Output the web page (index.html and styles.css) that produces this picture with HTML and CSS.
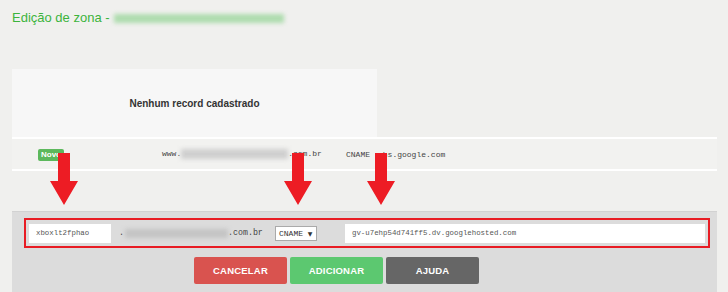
FILE: index.html
```html
<!DOCTYPE html>
<html lang="pt-BR">
<head>
  <meta charset="UTF-8">
  <title>Edição de zona</title>
  <link rel="stylesheet" href="styles.css">
</head>
<body>
  <div class="page">
    <h1 class="title">Edição de zona - <span class="blur blur-title"></span></h1>

    <div class="empty">Nenhum record cadastrado</div>

    <div class="record-row">
      <div class="cell cell-badge"><span class="badge">Novo</span></div>
      <div class="cell cell-name">www.<span class="blur blur-row"></span>.com.br</div>
      <div class="cell cell-value"><span class="type">CNAME</span>ghs.google.com</div>
    </div>

    <div class="panel">
      <div class="edit-line">
        <div class="field field-name">xboxlt2fphao</div>
        <div class="domain">.<span class="blur blur-panel"></span>.com.br</div>
        <div class="select">CNAME <span class="caret">▼</span></div>
        <div class="field field-value">gv-u7ehp54d741ff5.dv.googlehosted.com</div>
      </div>
      <div class="actions">
        <button class="btn btn-cancel">CANCELAR</button>
        <button class="btn btn-add">ADICIONAR</button>
        <button class="btn btn-help">AJUDA</button>
      </div>
    </div>
  </div>

  <!-- setas de destaque por cima da tela -->
  <svg class="arrows" width="728" height="292" viewBox="0 0 728 292">
    <polygon points="58,153 70,153 70,181 78,181 64,205 50,181 58,181"/>
    <polygon points="292,153 304,153 304,181 312,181 298,205 284,181 292,181"/>
    <polygon points="375,153 387,153 387,181 395,181 381,205 367,181 375,181"/>
  </svg>
</body>
</html>
```

FILE: styles.css
```css
body {
  margin: 0;
  background-color: #f0f0ee;
  font-family: "Liberation Sans", Arial, sans-serif;
  position: relative;
  width: 728px;
  height: 292px;
  overflow: hidden;
}
.page {
  padding: 0 11px 0 12px;
}
.title {
  margin: 0;
  padding-top: 10px;
  font-size: 13px;
  line-height: 16px;
  font-weight: normal;
  color: #3cb43c;
}
.blur {
  display: inline-block;
  filter: blur(2px);
  vertical-align: middle;
}
.blur-title {
  width: 170px;
  height: 9px;
  background-color: #aedcae;
  margin-left: 1px;
}
.empty {
  width: 365px;
  height: 68px;
  margin-top: 43px;
  background-color: #f7f7f7;
  display: flex;
  align-items: center;
  justify-content: center;
  font-size: 10px;
  font-weight: bold;
  color: #333;
}
.record-row {
  display: flex;
  align-items: center;
  height: 30px;
  border-top: 2px solid #fff;
  border-bottom: 2px solid #fff;
  background-color: #f2f2f0;
  font-family: "Liberation Mono", "Courier New", monospace;
  font-size: 8px;
  color: #444;
}
.cell-badge {
  width: 124px;
  padding-left: 26px;
  margin-top: 1px;
}
.badge {
  display: block;
  width: 26px;
  height: 12px;
  line-height: 12px;
  border-radius: 2px;
  background-color: #5cb85c;
  color: #fff;
  font-family: "Liberation Sans", Arial, sans-serif;
  font-size: 8px;
  font-weight: bold;
  padding-left: 3px;
  box-sizing: border-box;
}
.cell-name {
  width: 184px;
}
.blur-row {
  width: 107px;
  height: 10px;
  background-color: #cfcfcf;
}
.type {
  margin-right: 8px;
}
.panel {
  margin-top: 40px;
  height: 90px;
  padding: 6px 7px 0 12px;
  background-color: #dcdcdc;
  border-top: 1px solid #d2d2d2;
  box-sizing: border-box;
}
.edit-line {
  display: flex;
  align-items: center;
  height: 30px;
  border: 2px solid #e81c24;
  box-sizing: border-box;
  padding: 0 3px;
  font-family: "Liberation Mono", "Courier New", monospace;
  color: #444;
}
.field {
  height: 19px;
  line-height: 19px;
  background-color: #fff;
  font-size: 7.4px;
  padding-left: 7px;
  box-sizing: border-box;
  color: #555;
}
.field-name {
  width: 82px;
}
.domain {
  margin-left: 8px;
  width: 156px;
  font-size: 8.3px;
}
.blur-panel {
  width: 103px;
  height: 9px;
  background-color: #c4c4c4;
  margin-left: 1px;
}
.select {
  width: 42px;
  height: 15px;
  line-height: 13px;
  border: 1px solid #aaa;
  background-color: #fff;
  box-sizing: border-box;
  font-size: 8px;
  padding-left: 3px;
  color: #333;
}
.caret {
  font-family: "DejaVu Sans", sans-serif;
  font-size: 6px;
}
.field-value {
  margin-left: 28px;
  flex: 1;
}
.actions {
  display: flex;
  gap: 3px;
  margin-top: 9px;
  padding-left: 170px;
}
.btn {
  width: 93px;
  height: 27px;
  border: none;
  border-radius: 2px;
  color: #fff;
  font-family: "Liberation Sans", Arial, sans-serif;
  font-size: 9.5px;
  font-weight: bold;
  letter-spacing: 0.2px;
  cursor: pointer;
}
.btn-cancel {
  background-color: #d9534f;
}
.btn-add {
  background-color: #5cc870;
}
.btn-help {
  background-color: #666;
}
.arrows {
  position: absolute;
  left: 0;
  top: 0;
  pointer-events: none;
  fill: #ed1c24;
}
```
